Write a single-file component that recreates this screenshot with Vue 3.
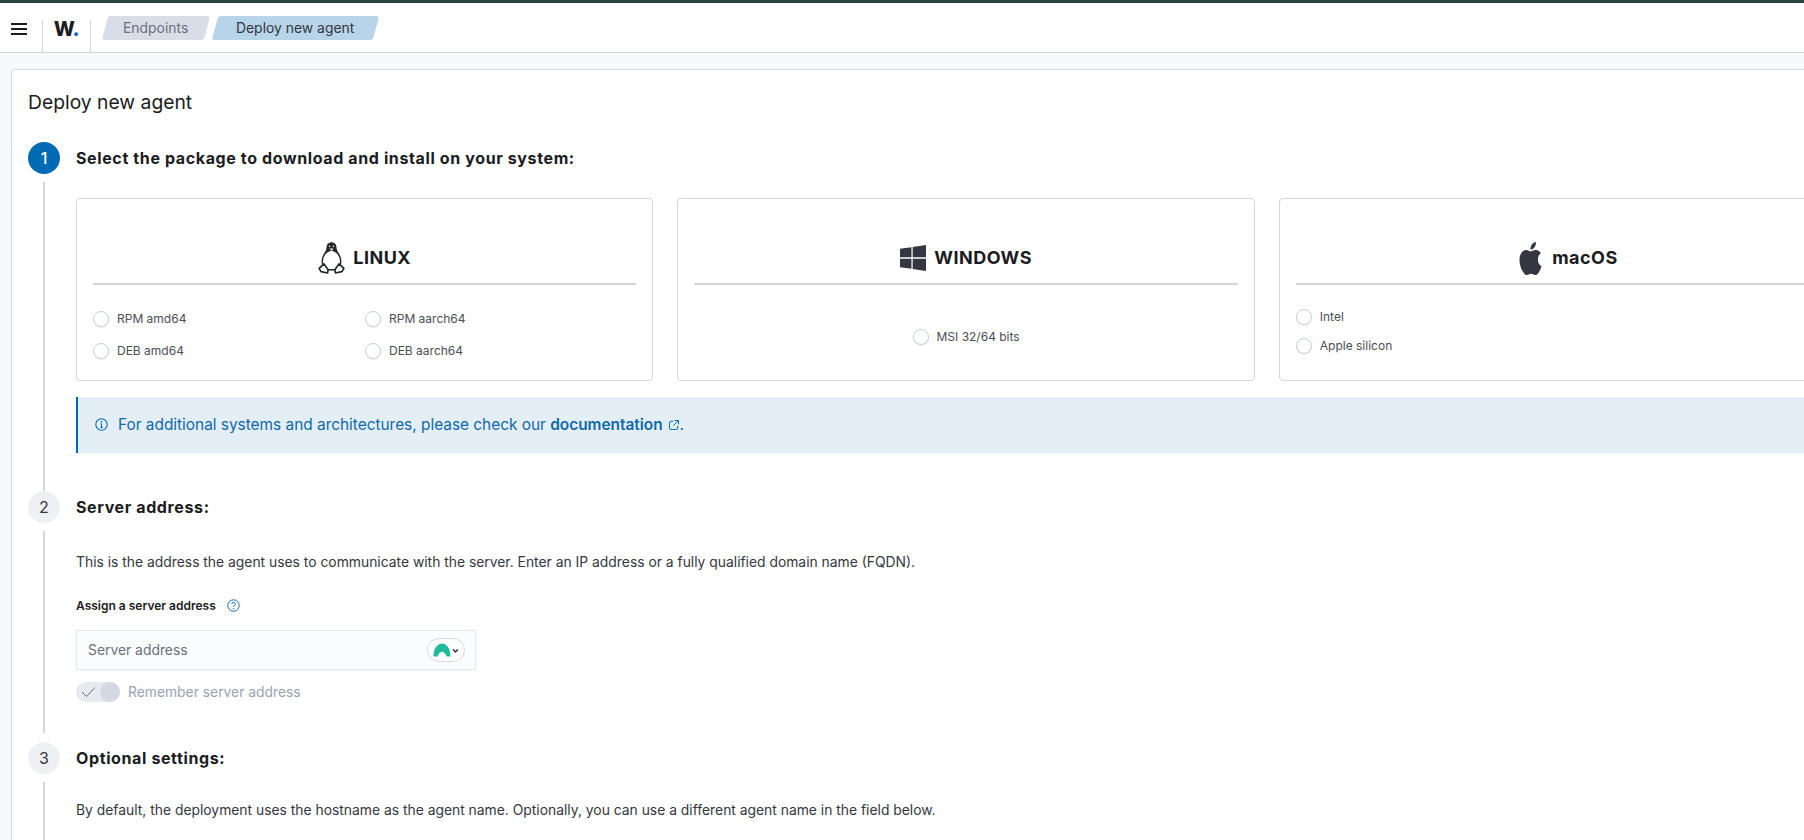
<script setup>
const linux = ['RPM amd64', 'RPM aarch64', 'DEB amd64', 'DEB aarch64']
</script>

<template>
  <div class="page">
    <div class="topline"></div>
    <header class="header">
      <button class="menu" aria-label="menu">
        <svg width="16" height="12" viewBox="0 0 16 12"><path d="M0 1h16M0 6h16M0 11h16" stroke="#1a1c21" stroke-width="1.8" fill="none" /></svg>
      </button>
      <div class="logo"><span>W</span><span class="dot">.</span></div>
      <nav class="crumbs">
        <span class="crumb muted"><span class="crumb-text">Endpoints</span></span>
        <span class="crumb active"><span class="crumb-text">Deploy new agent</span></span>
      </nav>
    </header>

    <main class="main">
      <section class="panel">
        <h1 class="title">Deploy new agent</h1>

        <div class="step first">
          <div class="rail">
            <div class="num current">1</div>
            <div class="line"></div>
          </div>
          <div class="content">
            <h2 class="step-title">Select the package to download and install on your system:</h2>
            <div class="cards">
              <div class="card">
                <div class="card-head">
                  <svg class="os" viewBox="0 0 24 30" width="27" height="32" preserveAspectRatio="none">
                    <path d="M12 .8C9.400 .8 8.200 2.800 8.200 5.200c0 2.200-.6 3.400-1.700 5C4.700 12.800 3.600 15.800 3.800 19c.1 2.500 1 5 2.500 7h11.400c1.500-2 2.400-4.500 2.500-7 .2-3.200-.9-6.200-2.700-8.800-1.100-1.600-1.700-2.800-1.700-5C15.800 2.800 14.600 .8 12 .8z" fill="#fff" stroke="#25272e" stroke-width="1.300" stroke-linejoin="round" />
                    <path d="M12 .8C9.400 .8 8.200 2.800 8.200 5.200c0 2.200-.6 3.400-1.700 5-.7 1-1.300 2.100-1.700 3.300 1.500-1.900 4.200-4.500 7.200-5.500 3 1 5.700 3.600 7.200 5.500-.4-1.200-1-2.300-1.700-3.300-1.100-1.600-1.700-2.800-1.700-5C15.800 2.800 14.600 .8 12 .8z" fill="#25272e" />
                    <path d="M10.200 6.200h3.600L12 8z" fill="#fff" />
                    <circle cx="10.300" cy="4" r=".7" fill="#fff" />
                    <circle cx="13.700" cy="4" r=".7" fill="#fff" />
                    <path d="M1 24.700l4.300-4.200 3.700 5.500-.5 3-5.800-1.200zM23 24.700l-4.300-4.200-3.700 5.500.5 3 5.800-1.200z" fill="#fff" stroke="#25272e" stroke-width="1.500" stroke-linejoin="round" />
                  </svg>
                  <span>LINUX</span>
                </div>
                <div class="options grid">
                  <label v-for="item in linux" :key="item" class="opt"><i class="radio"></i>{{ item }}</label>
                </div>
              </div>

              <div class="card">
                <div class="card-head">
                  <svg class="os" viewBox="0 0 25 24" width="26" height="26" preserveAspectRatio="none">
                    <path d="M0 3.500l11-1.500v9.300H0zM12.200 1.800L25 0v11.300H12.200zM0 12.700h11V22L0 20.500zM12.200 12.700H25V24l-12.800-1.800z" fill="#343741" />
                  </svg>
                  <span>WINDOWS</span>
                </div>
                <div class="options center">
                  <label class="opt"><i class="radio"></i>MSI 32/64 bits</label>
                </div>
              </div>

              <div class="card">
                <div class="card-head">
                  <svg class="os" viewBox="0 0 24 24" width="27" height="33" preserveAspectRatio="none">
                    <path d="M12.152 6.896c-.948 0-2.415-1.078-3.960-1.040-2.040.027-3.910 1.183-4.961 3.014-2.117 3.675-.546 9.103 1.519 12.090 1.013 1.454 2.208 3.090 3.792 3.039 1.520-.065 2.090-.987 3.935-.987 1.831 0 2.350.987 3.960.948 1.637-.026 2.676-1.480 3.676-2.948 1.156-1.688 1.636-3.325 1.662-3.415-.039-.013-3.182-1.221-3.220-4.857-.026-3.040 2.480-4.494 2.597-4.559-1.429-2.090-3.623-2.324-4.390-2.376-2-.156-3.675 1.090-4.610 1.090zM15.530 3.830c.843-1.012 1.400-2.427 1.245-3.830-1.207.052-2.662.805-3.532 1.818-.780.896-1.454 2.338-1.273 3.714 1.338.104 2.715-.688 3.559-1.701" fill="#343741" />
                  </svg>
                  <span>macOS</span>
                </div>
                <div class="options stack">
                  <label class="opt"><i class="radio"></i>Intel</label>
                  <label class="opt"><i class="radio"></i>Apple silicon</label>
                </div>
              </div>
            </div>

            <div class="callout">
              <svg class="info" viewBox="0 0 16 16" width="13" height="13">
                <circle cx="8" cy="8" r="7" fill="none" stroke="#006bb4" stroke-width="1.300" />
                <path d="M8 7v5M6.500 12h3M6.800 7H8" fill="none" stroke="#006bb4" stroke-width="1.300" />
                <circle cx="8" cy="4.500" r="1" fill="#006bb4" />
              </svg>
              <span>For additional systems and architectures, please check our <a class="doc">documentation</a><svg class="ext" viewBox="0 0 16 16" width="12" height="12"><path d="M7 3H4a2 2 0 0 0-2 2v7a2 2 0 0 0 2 2h7a2 2 0 0 0 2-2V9M9 2h5v5M14 2L7 9" fill="none" stroke="#006bb4" stroke-width="1.300" /></svg>.</span>
            </div>
          </div>
        </div>

        <div class="step second">
          <div class="rail">
            <div class="num">2</div>
            <div class="line"></div>
          </div>
          <div class="content">
            <h2 class="step-title">Server address:</h2>
            <p class="desc">This is the address the agent uses to communicate with the server. Enter an IP address or a fully qualified domain name (FQDN).</p>
            <div class="label">
              <span>Assign a server address</span>
              <svg viewBox="0 0 16 16" width="13" height="13">
                <circle cx="8" cy="8" r="7" fill="none" stroke="#006bb4" stroke-width="1.200" />
                <path d="M5.800 6.200a2.200 2.200 0 1 1 3.300 1.900c-.7.400-1.100.9-1.100 1.700" fill="none" stroke="#006bb4" stroke-width="1.200" />
                <circle cx="8" cy="11.800" r=".8" fill="#006bb4" />
              </svg>
            </div>
            <div class="input">
              <span>Server address</span>
              <span class="ext-pill">
                <svg viewBox="0 0 18 14" width="18" height="14"><path d="M.5 13.500C.5 6 4 .5 9 .5s8.500 5.500 8.500 13h-4C13 11 11 9 9 8.500 7 9 5 11 4.500 13.500z" fill="#1fbc9c" /></svg>
                <svg viewBox="0 0 10 10" width="7" height="7"><path d="M1.500 3.500L5 7l3.500-3.500" fill="none" stroke="#1a1c21" stroke-width="1.800" /></svg>
              </span>
            </div>
            <div class="switch-row">
              <span class="switch">
                <svg viewBox="0 0 15 12" width="15" height="12"><path d="M1 6l4.500 4.500L14 1.500" fill="none" stroke="#69707d" stroke-width="1" /></svg>
                <i class="thumb"></i>
              </span>
              <span>Remember server address</span>
            </div>
          </div>
        </div>

        <div class="step third">
          <div class="rail">
            <div class="num">3</div>
            <div class="line"></div>
          </div>
          <div class="content">
            <h2 class="step-title">Optional settings:</h2>
            <p class="desc">By default, the deployment uses the hostname as the agent name. Optionally, you can use a different agent name in the field below.</p>
          </div>
        </div>
      </section>
    </main>
  </div>
</template>

<style scoped>
.page {
  width: 1804px;
  height: 840px;
  overflow: hidden;
  background: #f7f9fc;
  font-family: Inter, "Liberation Sans", sans-serif;
  color: #343741;
  display: flex;
  flex-direction: column;
}
.topline { height: 3px; background: #2a4640; flex: none; }
.header {
  height: 49px;
  flex: none;
  background: #fff;
  border-bottom: 1px solid #d3d6dc;
  display: flex;
  align-items: stretch;
}
.menu {
  width: 43px;
  border: 0;
  background: none;
  padding: 0 4px 14px 0;
  display: flex;
  align-items: center;
  justify-content: center;
  border-right: 1px solid #d3d6dc;
  margin-top: 17px;
}
.logo {
  width: 47px;
  margin-top: 17px;
  border-right: 1px solid #d3d6dc;
  font-size: 20px;
  font-weight: 800;
  color: #1a1c21;
  text-align: center;
  line-height: 19px;
  letter-spacing: -0.5px;
}
.dot { color: #0b64dd; }
.crumbs {
  display: flex;
  gap: 8px;
  padding-left: 14px;
  align-items: flex-start;
  padding-top: 13px;
}
.crumb {
  height: 24px;
  transform: skewX(-15deg);
  border-radius: 3px;
  display: flex;
  align-items: center;
  justify-content: center;
  font-size: 13.9px;
  white-space: nowrap;
  box-sizing: border-box;
}
.crumb-text { transform: skewX(15deg); }
.muted { background: #d9dde8; color: #69707d; width: 102px; }
.active { background: #b7d4e9; color: #343741; width: 161px; }

.main { padding: 16px 0 0 11px; flex: 1; }
.panel {
  width: 1900px;
  height: 900px;
  box-sizing: border-box;
  background: #fff;
  border: 1px solid #d3dae6;
  border-radius: 4px;
  padding: 16px;
  box-shadow: 0 1px 2px rgba(0,0,0,.03);
}
.title {
  margin: 0 0 24px;
  font-size: 19.3px;
  font-weight: 400;
  line-height: 32px;
  color: #1a1c21;
}
.step { display: flex; gap: 16px; }
.rail { width: 32px; flex: none; display: flex; flex-direction: column; align-items: center; }
.num {
  width: 32px;
  height: 32px;
  border-radius: 50%;
  background: #eef0f3;
  color: #343741;
  font-size: 16px;
  display: flex;
  align-items: center;
  justify-content: center;
  flex: none;
}
.num.current { background: #006bb4; color: #fff; font-weight: 500; }
.line { width: 2px; flex: 1; background: #d3d6dc; margin: 8px 0 7px; }
.content { flex: 1; min-width: 0; }
.step-title {
  margin: 0;
  font-size: 16px;
  line-height: 32px;
  font-weight: 700;
  color: #1a1c21;
  letter-spacing: 0.62px;
}
.cards { display: flex; gap: 24px; margin-top: 24px; }
.card {
  width: 577.4px;
  height: 183px;
  flex: none;
  box-sizing: border-box;
  background: #fff;
  border: 1px solid #d3d6dc;
  border-radius: 4px;
  padding: 0 16px;
}
.card-head {
  border-bottom: 2px solid #d3d5da;
  display: flex;
  align-items: center;
  justify-content: center;
  gap: 8px;
  padding-top: 34px;
  height: 50px;
  font-size: 18px;
  font-weight: 700;
  color: #1a1c21;
  letter-spacing: .5px;
  line-height: 32px;
}
.os { flex: none; }
.options { font-size: 12px; color: #4a4d55; }
.grid { display: grid; grid-template-columns: 272px 1fr; row-gap: 14px; padding-top: 25px; }
.center { display: flex; justify-content: center; padding-top: 43px; }
.stack { display: flex; flex-direction: column; gap: 11px; padding-top: 23px; }
.opt { display: flex; align-items: center; gap: 8px; height: 18px; line-height: 18px; }
.radio {
  width: 16px;
  height: 16px;
  box-sizing: border-box;
  border: 1px solid #c9cfda;
  border-radius: 50%;
  background: #fff;
  box-shadow: 0 1px 1px rgba(0,0,0,.06);
  flex: none;
}
.callout {
  margin-top: 16px;
  height: 56px;
  box-sizing: border-box;
  background: #e3eef7;
  border-left: 2px solid #006bb4;
  color: #0f69a8;
  display: flex;
  align-items: center;
  gap: 10px;
  padding: 0 0 2px 17px;
  font-size: 15.4px;
}
.info { flex: none; }
.doc { font-weight: 600; }
.ext { margin: 0 0 -1px 5px; }
.first { height: 349px; }
.first .line { margin-bottom: 0; }
.second { height: 251px; }
.second .line { margin-bottom: 9px; }
.third { height: 200px; }
.desc { margin: 0; font-size: 13.87px; line-height: 20px; color: #343741; }
.second .desc { margin-top: 29px; }
.third .desc { margin-top: 26px; }
.label {
  margin-top: 23px;
  display: flex;
  align-items: center;
  gap: 11px;
  font-size: 12px;
  font-weight: 600;
  color: #1a1c21;
  height: 20px;
}
.input {
  width: 400px;
  height: 40px;
  margin-top: 15px;
  box-sizing: border-box;
  background: #fbfcfd;
  border: 1px solid #e3e7ef;
  box-shadow: 0 1px 2px rgba(0,0,0,.04);
  display: flex;
  align-items: center;
  justify-content: space-between;
  padding: 0 10px 0 11px;
  font-size: 13.87px;
  color: #69707d;
}
.ext-pill {
  width: 38px;
  height: 24px;
  box-sizing: border-box;
  border: 1px solid #d3dae6;
  border-radius: 12px;
  background: #fff;
  display: flex;
  align-items: center;
  justify-content: center;
  gap: 1px;
}
.switch-row {
  margin-top: 12px;
  display: flex;
  align-items: center;
  gap: 8px;
  font-size: 13.85px;
  color: #98a2b3;
}
.switch {
  width: 44px;
  height: 20px;
  border-radius: 10px;
  background: #e7e9ee;
  display: flex;
  align-items: center;
  justify-content: space-between;
  padding-left: 5px;
  box-sizing: border-box;
}
.thumb { width: 20px; height: 20px; border-radius: 50%; background: #d3d8e3; }
</style>

<style>
html, body { margin: 0; overflow: hidden; }
</style>
